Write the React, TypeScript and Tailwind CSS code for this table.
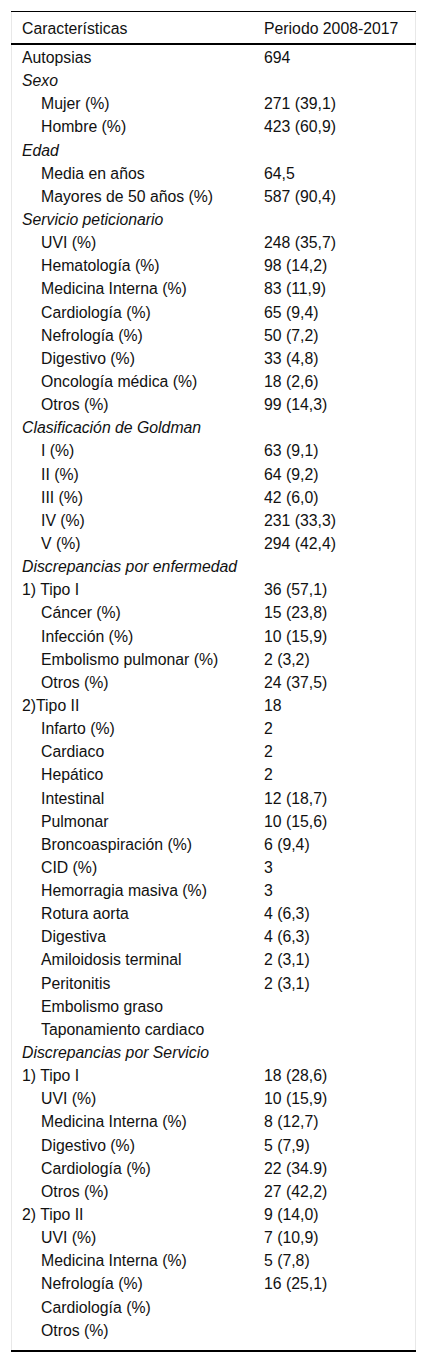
import React from "react";

type Row = {
  label: string;
  value?: string;
  kind?: "section" | "sub";
};

const rows: Row[] = [
  { label: "Autopsias", value: "694" },
  { label: "Sexo", kind: "section" },
  { label: "Mujer (%)", value: "271 (39,1)", kind: "sub" },
  { label: "Hombre (%)", value: "423 (60,9)", kind: "sub" },
  { label: "Edad", kind: "section" },
  { label: "Media en años", value: "64,5", kind: "sub" },
  { label: "Mayores de 50 años (%)", value: "587 (90,4)", kind: "sub" },
  { label: "Servicio peticionario", kind: "section" },
  { label: "UVI (%)", value: "248 (35,7)", kind: "sub" },
  { label: "Hematología (%)", value: "98 (14,2)", kind: "sub" },
  { label: "Medicina Interna (%)", value: "83 (11,9)", kind: "sub" },
  { label: "Cardiología (%)", value: "65 (9,4)", kind: "sub" },
  { label: "Nefrología (%)", value: "50 (7,2)", kind: "sub" },
  { label: "Digestivo (%)", value: "33 (4,8)", kind: "sub" },
  { label: "Oncología médica (%)", value: "18 (2,6)", kind: "sub" },
  { label: "Otros (%)", value: "99 (14,3)", kind: "sub" },
  { label: "Clasificación de Goldman", kind: "section" },
  { label: "I (%)", value: "63 (9,1)", kind: "sub" },
  { label: "II (%)", value: "64 (9,2)", kind: "sub" },
  { label: "III (%)", value: "42 (6,0)", kind: "sub" },
  { label: "IV (%)", value: "231 (33,3)", kind: "sub" },
  { label: "V (%)", value: "294 (42,4)", kind: "sub" },
  { label: "Discrepancias por enfermedad", kind: "section" },
  { label: "1) Tipo I", value: "36 (57,1)" },
  { label: "Cáncer (%)", value: "15 (23,8)", kind: "sub" },
  { label: "Infección (%)", value: "10 (15,9)", kind: "sub" },
  { label: "Embolismo pulmonar (%)", value: "2 (3,2)", kind: "sub" },
  { label: "Otros (%)", value: "24 (37,5)", kind: "sub" },
  { label: "2)Tipo II", value: "18" },
  { label: "Infarto (%)", value: "2", kind: "sub" },
  { label: "Cardiaco", value: "2", kind: "sub" },
  { label: "Hepático", value: "2", kind: "sub" },
  { label: "Intestinal", value: "12 (18,7)", kind: "sub" },
  { label: "Pulmonar", value: "10 (15,6)", kind: "sub" },
  { label: "Broncoaspiración (%)", value: "6 (9,4)", kind: "sub" },
  { label: "CID (%)", value: "3", kind: "sub" },
  { label: "Hemorragia masiva (%)", value: "3", kind: "sub" },
  { label: "Rotura aorta", value: "4 (6,3)", kind: "sub" },
  { label: "Digestiva", value: "4 (6,3)", kind: "sub" },
  { label: "Amiloidosis terminal", value: "2 (3,1)", kind: "sub" },
  { label: "Peritonitis", value: "2 (3,1)", kind: "sub" },
  { label: "Embolismo graso", kind: "sub" },
  { label: "Taponamiento cardiaco", kind: "sub" },
  { label: "Discrepancias por Servicio", kind: "section" },
  { label: "1) Tipo I", value: "18 (28,6)" },
  { label: "UVI (%)", value: "10 (15,9)", kind: "sub" },
  { label: "Medicina Interna (%)", value: "8 (12,7)", kind: "sub" },
  { label: "Digestivo (%)", value: "5 (7,9)", kind: "sub" },
  { label: "Cardiología (%)", value: "22 (34.9)", kind: "sub" },
  { label: "Otros (%)", value: "27 (42,2)", kind: "sub" },
  { label: "2) Tipo II", value: "9 (14,0)" },
  { label: "UVI (%)", value: "7 (10,9)", kind: "sub" },
  { label: "Medicina Interna (%)", value: "5 (7,8)", kind: "sub" },
  { label: "Nefrología (%)", value: "16 (25,1)", kind: "sub" },
  { label: "Cardiología (%)", kind: "sub" },
  { label: "Otros (%)", kind: "sub" },
];

export default function App() {
  return (
    <div className="bg-white pt-[11px] pl-[11px] font-['Liberation_Sans',Arial,sans-serif] text-[15.8px] text-[#111]">
      <div className="w-[405px] border-x border-[#e8e8e8]">
        {/* Header */}
        <div className="flex h-[34px] border-t border-black border-b-2 -mx-px pt-px">
          <div className="w-[243px] pl-[11px] leading-[31px]">Características</div>
          <div className="pl-[10px] leading-[31px]">Periodo 2008-2017</div>
        </div>

        {/* Body */}
        <div className="pt-px pb-[8px]">
          {rows.map((r, i) => (
            <div key={i} className="flex h-[23.15px] leading-[23.15px]">
              <div
                className={
                  "w-[242px] whitespace-nowrap " +
                  (r.kind === "sub" ? "pl-[29px]" : "pl-[10px]") +
                  (r.kind === "section" ? " italic" : "")
                }
              >
                {r.label}
              </div>
              <div className="pl-[10px] whitespace-nowrap">{r.value}</div>
            </div>
          ))}
        </div>
        <div className="-mx-px h-[2px] bg-black" />
      </div>
    </div>
  );
}
